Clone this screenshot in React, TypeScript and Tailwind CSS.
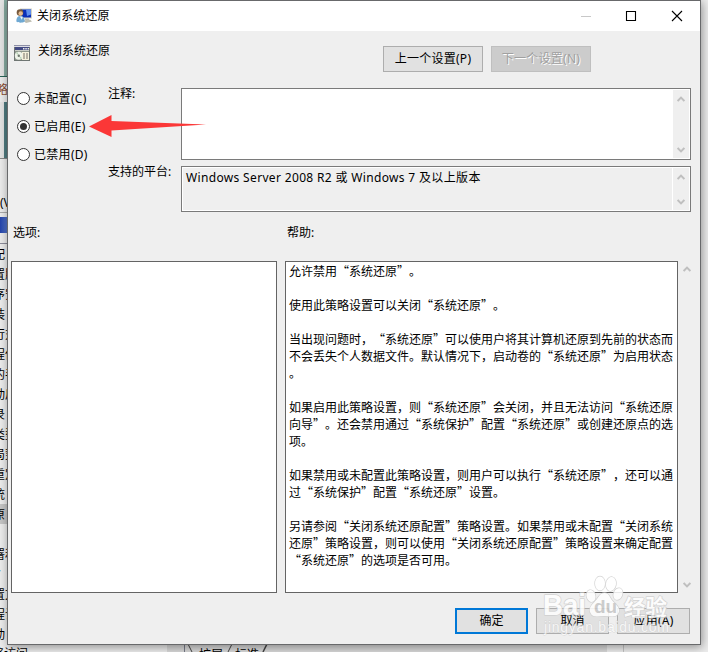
import React from "react";

const helpLines = [
  "允许禁用“系统还原”。",
  "",
  "使用此策略设置可以关闭“系统还原”。",
  "",
  "当出现问题时，“系统还原”可以使用户将其计算机还原到先前的状态而",
  "不会丢失个人数据文件。默认情况下，启动卷的“系统还原”为启用状态",
  "。",
  "",
  "如果启用此策略设置，则“系统还原”会关闭，并且无法访问“系统还原",
  "向导”。还会禁用通过“系统保护”配置“系统还原”或创建还原点的选",
  "项。",
  "",
  "如果禁用或未配置此策略设置，则用户可以执行“系统还原”，还可以通",
  "过“系统保护”配置“系统还原”设置。",
  "",
  "另请参阅“关闭系统还原配置”策略设置。如果禁用或未配置“关闭系统",
  "还原”策略设置，则可以使用“关闭系统还原配置”策略设置来确定配置",
  "“系统还原”的选项是否可用。",
];

const listItems = ["配", "置服", "序安", "装", "行对", "程使", "的手", "动后", "录", "类型", "局势", "重定", "统", "原", "", "署和", "V ", "置文", "程计", "动"];

function Chevron({ up = false, className = "" }: { up?: boolean; className?: string }) {
  return (
    <svg className={className} width="8" height="6" viewBox="0 0 8 6" fill="none" stroke="#bfbfbf" strokeWidth="2">
      <path d={up ? "M0.6 5 L4 1.6 L7.4 5" : "M0.6 1 L4 4.4 L7.4 1"} />
    </svg>
  );
}

function ScrollTrack({ className = "" }: { className?: string }) {
  return (
    <div className={"flex w-4 flex-col items-center justify-between bg-[#efefef] " + className}>
      <Chevron up />
      <Chevron />
    </div>
  );
}

function Radio({ label, checked = false }: { label: string; checked?: boolean }) {
  return (
    <div className="flex h-7 items-center gap-1">
      <span className="flex size-[13px] shrink-0 items-center justify-center rounded-full border border-[#333] bg-white">
        {checked && <span className="size-[7px] rounded-full bg-[#333]" />}
      </span>
      <span className="whitespace-nowrap pt-px tracking-[0.3px]">{label}</span>
    </div>
  );
}

function ComputerIcon() {
  return (
    <svg width="16" height="16" viewBox="0 0 16 16">
      <path d="M4 0.500h12v10H4z" fill="#d3d3c6" />
      <path d="M5 1.500h10v8H5z" fill="#0a2fb8" />
      <path d="M10 1.500h5v5l-4 1.500z" fill="#5f8fec" />
      <path d="M9 10.500h4v1.500H9zM7 12.500l7-1 2 2-6 1.500z" fill="#bdbdb2" />
      <circle cx="4" cy="4.600" r="3.300" fill="#76583b" />
      <circle cx="4.700" cy="5.500" r="2.200" fill="#e6bd91" />
      <path d="M0.300 13.500c0-3.800 1.500-5.500 4-5.500s4.500 2 4.500 5.500c-2 1.600-6.200 1.600-8.500 0z" fill="#6fa9d3" />
      <path d="M3.800 8.500l2 3.300 1-3z" fill="#eef5fa" />
    </svg>
  );
}

function PolicyIcon() {
  return (
    <svg width="16" height="16" viewBox="0 0 16 16">
      <path d="M0 0h16v16H0z" fill="#6f7673" />
      <path d="M0 0h16v1H0z" fill="#8d8fa6" />
      <path d="M0 1h16v1H0z" fill="#dcdce2" />
      <path d="M1 2h14v3H1z" fill="#434a83" />
      <path d="M9 3h1.500v1.500H9zM11.300 3h1.500v1.500h-1.500zM13.600 3h1.400v1.500h-1.400z" fill="#ececec" />
      <path d="M1 5h14v1H1z" fill="#c9cdc6" />
      <path d="M1 6h14v9H1z" fill="#8e978c" />
      <circle cx="4.800" cy="10.800" r="4" fill="#eef3e9" />
      <path d="M4.800 10.800L2 8l1.500-1zM4.800 10.800l3 2-1 1.500z" fill="#b7d3b6" />
      <circle cx="4.800" cy="10.800" r="1.200" fill="#6f7a6f" />
      <path d="M8 7h7v8H8z" fill="#f4f1dc" />
      <path d="M9 8.500h2v1H9zM9 10.500h2v1H9zM9 12.500h2v1H9zM12 8.500h2v1h-2zM12 10.500h2v1h-2zM12 12.500h2v1h-2z" fill="#77736a" />
    </svg>
  );
}

function Watermark() {
  return (
    <svg className="absolute left-[542px] top-[572px]" width="140" height="70" viewBox="0 0 140 70" fill="#fff" stroke="#cdcdcd" strokeWidth="1.4" strokeLinejoin="round" style={{ paintOrder: "stroke" }}>
      <g opacity="0.85">
        <ellipse cx="49" cy="24" rx="4.400" ry="6" transform="rotate(-15 49 24)" />
        <ellipse cx="58" cy="11.500" rx="5" ry="7" />
        <ellipse cx="69" cy="12" rx="5" ry="7" transform="rotate(10 69 12)" />
        <ellipse cx="76" cy="22" rx="4.400" ry="6" transform="rotate(20 76 22)" />
        <path d="M62.500 21c-5 0-6 5-10 9s-6 7-4 11c2 5 8 3 14 3s12 2 14-3c2-4-1-7-5-11s-4-9-9-9z" />
        <text x="1" y="43" fontSize="29" fontWeight="700" fontFamily="Liberation Sans, sans-serif" textLength="43" lengthAdjust="spacingAndGlyphs">Bai</text>
        <text x="52" y="41" fontSize="19" fontWeight="700" fontFamily="Liberation Sans, sans-serif" fill="#c6c6c6" stroke="none">du</text>
        <text x="82" y="43" fontSize="21.500" fontWeight="700" fontFamily="Noto Sans CJK SC, sans-serif">经验</text>
      </g>
      <text x="2" y="60" fontSize="14" strokeWidth="0.8" opacity="0.7" fontFamily="Liberation Sans, sans-serif" textLength="125" lengthAdjust="spacing">jingyan.baidu.com</text>
    </svg>
  );
}

export default function App() {
  return (
    <div className="relative h-[652px] w-[708px] overflow-hidden bg-[#ececec] font-['Noto_Sans','Noto_Sans_CJK_SC',sans-serif] text-xs leading-4 text-black">
      {/* Editor window behind the dialog */}
      <div className="flex h-full w-full flex-col">
        <div className="h-[77px] w-[8px] shrink-0 border-b border-[#286357] bg-gradient-to-r from-[#e4e4e4] from-50% to-[#87aaa0] to-50%" />
        <div className="flex h-[25px] w-[8px] shrink-0 items-center justify-end overflow-hidden whitespace-nowrap text-[#874b32]">策略</div>
        <div className="h-[57px] w-[8px] shrink-0 border-b border-[#888] bg-gradient-to-r from-[#e4e4e4] from-50% to-[#507b80] to-50%" />
        <div className="h-[34px] w-[8px] shrink-0" />
        <div className="flex h-[20px] w-[8px] shrink-0 items-center overflow-hidden border-b border-[#aaa] whitespace-nowrap">(V)</div>
        <div className="mb-2 mt-1 h-[16px] w-[8px] shrink-0 bg-gradient-to-r from-[#2443aa] to-[#5878cc]" />
        <div className="h-[3px] w-[8px] shrink-0 border-b border-[#8c8c9a]" />
        <div className="flex h-[400px] w-[8px] shrink-0 flex-col">
          {listItems.map((item, i) => (
            <div key={i} className={"flex h-5 shrink-0 items-center overflow-hidden whitespace-nowrap pt-px " + (i === 13 ? "bg-[#c5c5c5]" : "")}>
              <span className="-ml-[7px]">{item}</span>
            </div>
          ))}
        </div>
        <div className="flex h-[8px] shrink-0 overflow-hidden">
          <div className="w-[167px] whitespace-nowrap pt-[2px]"><span className="-ml-2">略访问</span></div>
          <div className="w-[17px] bg-[#d8d8d8]" />
          <div className="flex w-[423px] border-l border-[#777b88] bg-[#d8d8d8]">
            <svg className="shrink-0" width="14" height="8" viewBox="0 0 14 8" fill="none" stroke="#444"><path d="M3 0l4 8" /></svg>
            <span className="w-[25px] pt-[3px]">扩展</span>
            <svg className="shrink-0" width="11" height="8" viewBox="0 0 11 8" fill="none" stroke="#444"><path d="M8 0L4 8" /></svg>
            <span className="w-[26px] pt-[3px]">标准</span>
            <svg className="shrink-0" width="11" height="8" viewBox="0 0 11 8" fill="none" stroke="#444" strokeWidth="1.500"><path d="M6 0L2 8" /></svg>
          </div>
          <div className="ml-4 w-px bg-[#c4c4c4]" />
        </div>
      </div>

      <main className="absolute left-[7px] top-0 flex h-[645px] w-[694px] flex-col border border-[#68696b] bg-[#efefef] shadow-[1px_2px_9px_rgba(0,0,0,0.4)]">
        <header className="flex h-[30px] shrink-0 items-center bg-white pl-2">
          <ComputerIcon />
          <span className="ml-[5px] tracking-[0.1px]">关闭系统还原</span>
          <svg className="ml-auto mr-[17px]" width="103" height="12" viewBox="0 0 103 12" fill="none" stroke="#000">
            <path d="M1 6.500H11" stroke="#c8c8c8" />
            <path d="M46.500 1.500h9v9h-9z" strokeWidth="1.100" />
            <path d="M92 1l10 10M102 1L92 11" strokeWidth="1.100" />
          </svg>
        </header>

        <div className="flex h-[57px] shrink-0 pl-1.5">
          <div className="mt-[14px]"><PolicyIcon /></div>
          <span className="ml-2 mt-3">关闭系统还原</span>
          <div className="ml-auto mr-[109px] mt-[15px] flex gap-2 tracking-[0.25px]">
            <button className="h-[26px] w-[100px] border border-[#adadad] bg-[#e1e1e1]">上一个设置(P)</button>
            <button className="h-[26px] w-[100px] border border-[#bfbfbf] bg-[#ccc] text-[#a0a0a0] [text-shadow:1px_1px_0_#fff]">下一个设置(N)</button>
          </div>
        </div>

        <div className="flex h-[124px] shrink-0">
          <div className="w-[100px] pl-[9px]">
            <div className="-mt-1">
              <Radio label="未配置(C)" />
              <Radio label="已启用(E)" checked />
              <Radio label="已禁用(D)" />
            </div>
          </div>
          <div className="flex w-[73px] flex-col">
            <span className="-mt-[2px] h-[78px]">注释:</span>
            <span className="whitespace-nowrap">支持的平台:</span>
          </div>
          <div className="flex w-[510px] flex-col gap-1.5">
            <div className="flex h-[72px] shrink-0 justify-end border border-[#7a7a7a] bg-white p-px">
              <ScrollTrack className="pb-[5px] pr-px pt-[6px]" />
            </div>
            <div className="flex h-[46px] shrink-0 border border-[#7a7a7a] bg-white p-px">
              <div className="flex-1 bg-[#efefef] pl-[3px] pt-[2px] tracking-[0.34px]">Windows Server 2008 R2 或 Windows 7 及以上版本</div>
              <ScrollTrack className="ml-px pb-[5px] pr-px pt-[6px]" />
            </div>
          </div>
        </div>

        <div className="flex h-[49px] shrink-0 pt-[13px]">
          <span className="w-[274px] pl-[5px]">选项:</span>
          <span className="pl-[5px]">帮助:</span>
        </div>

        <div className="flex h-[332px] shrink-0 pl-[3px]">
          <section className="w-[266px] border border-[#646464] bg-white" />
          <section className="ml-2 w-[393px] border border-[#646464] bg-white pl-[3px] font-['Noto_Sans_CJK_SC',sans-serif] leading-[17px] [text-spacing-trim:space-all]">
            {helpLines.map((line, i) => (
              <div key={i} className="h-[17px] whitespace-nowrap">{line}</div>
            ))}
          </section>
          <div className="flex w-[17px] flex-col items-center justify-between py-[5px]">
            <Chevron up />
            <Chevron />
          </div>
        </div>

        <footer className="flex justify-end gap-2 pr-[10px] pt-[15px]">
          <button className="h-[26px] w-[73px] border-2 border-[#0078d7] bg-[#e1e1e1]">确定</button>
          <button className="h-[26px] w-[73px] border border-[#adadad] bg-[#e1e1e1]">取消</button>
          <button className="h-[26px] w-[73px] border border-[#adadad] bg-[#e1e1e1] tracking-[0.25px]">应用(A)</button>
        </footer>
      </main>

      <svg className="absolute left-[89px] top-[114px]" width="118" height="24" viewBox="0 0 118 24">
        <path d="M0 12.500L22.500 1v6L117 10.500 22.500 16.500v6.500z" fill="#fb3737" />
      </svg>
      <Watermark />
    </div>
  );
}
